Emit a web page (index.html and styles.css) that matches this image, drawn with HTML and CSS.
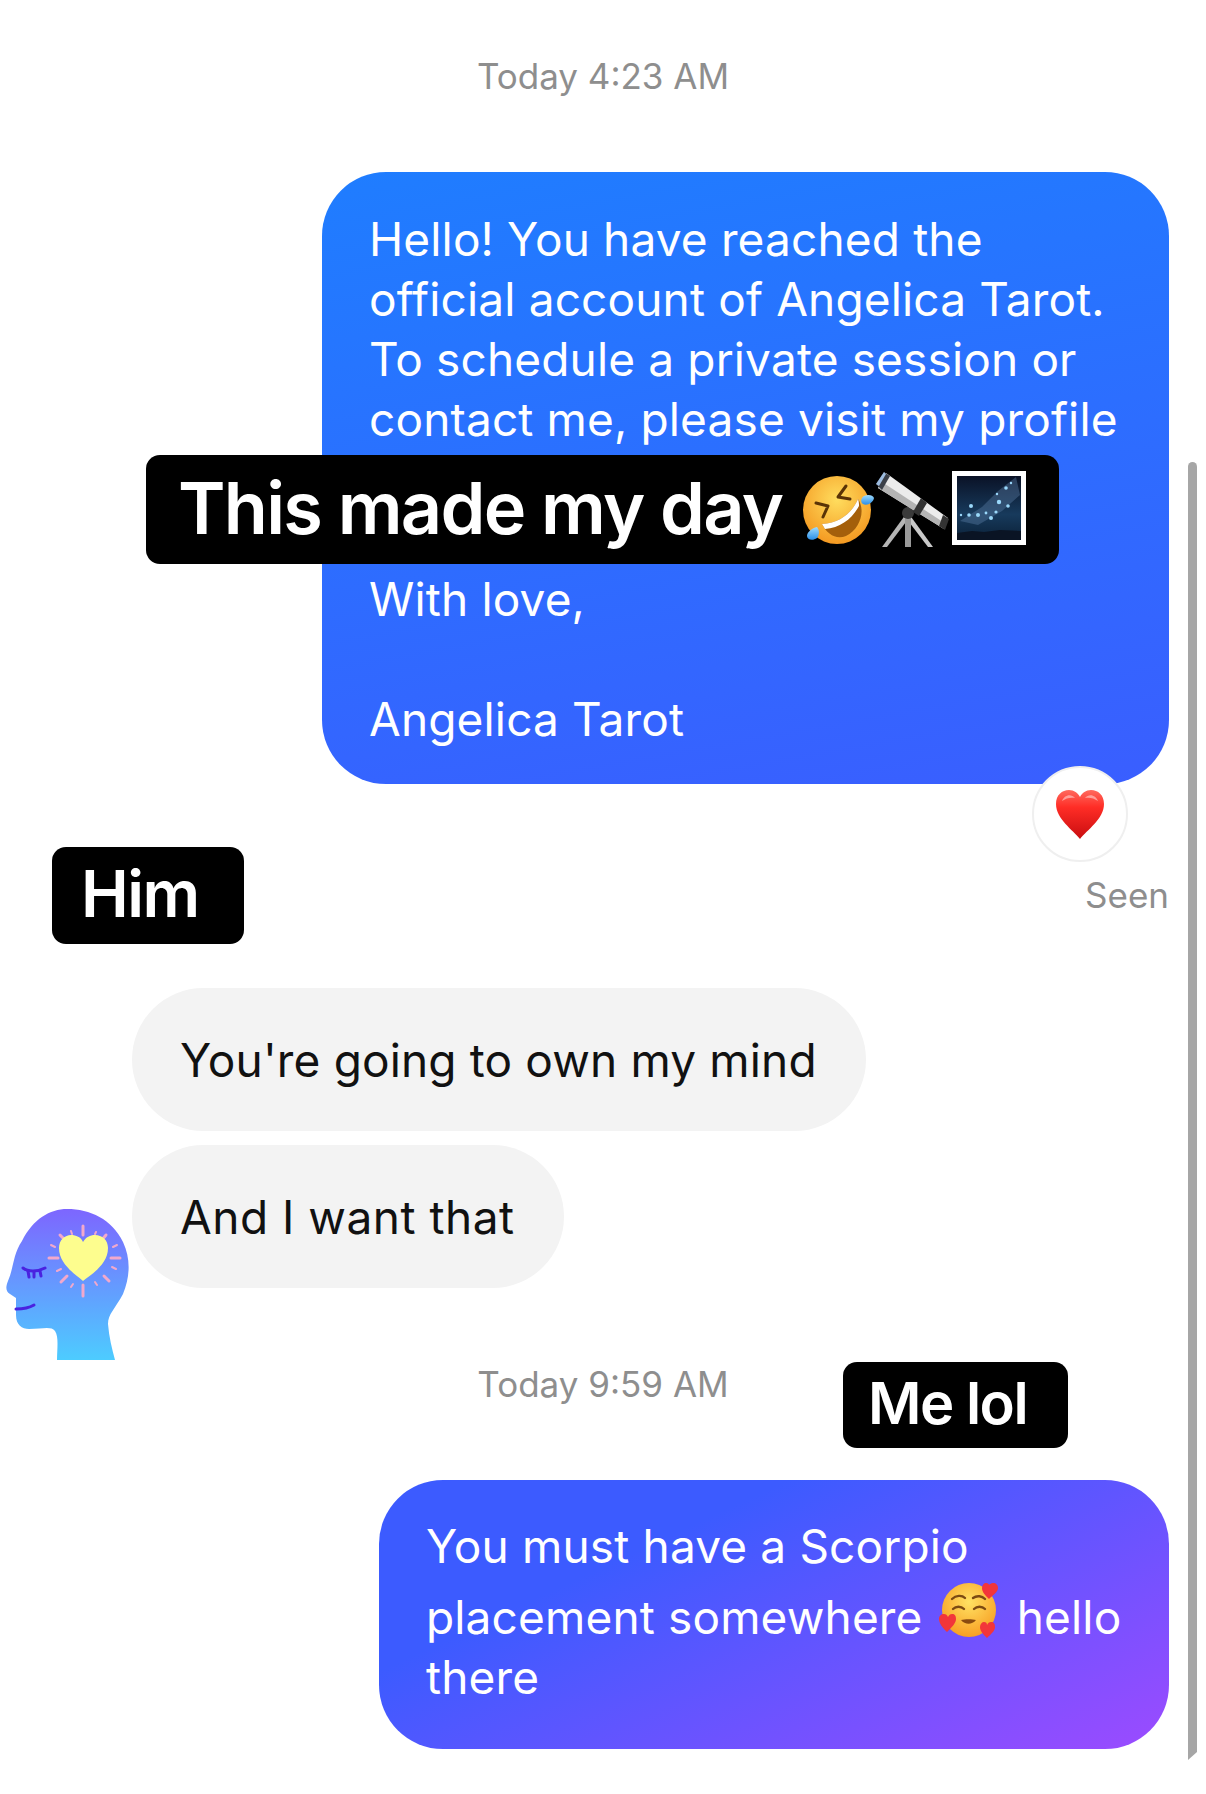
FILE: index.html
```html
<!DOCTYPE html>
<html lang="en">
<head>
<meta charset="UTF-8">
<title>Chat</title>
<link rel="stylesheet" href="styles.css">
</head>
<body>
<div id="page">
	<div class="time first">Today 4:23 AM</div>
	<div class="bubble blue">
		Hello! You have reached the<br>
		official account of Angelica Tarot.<br>
		To schedule a private session or<br>
		contact me, please visit my profile<br>
		<br>
		<br>
		With love,<br>
		<br>
		Angelica Tarot
	</div>
	<div class="reaction">
		<svg class="heart" viewBox="0 0 48 49">
			<defs>
				<linearGradient id="heartFill" x1="0" y1="0" x2="0" y2="1">
					<stop offset="0" stop-color="#ff6a5e"/>
					<stop offset=".35" stop-color="#ff2d26"/>
					<stop offset="1" stop-color="#c90d10"/>
				</linearGradient>
			</defs>
			<path d="M24 49C17 40 0 29 0 14 0 5 6 0 13 0c5 0 9 3 11 7 2-4 6-7 11-7 7 0 13 5 13 14 0 15-17 26-24 35z" fill="url(#heartFill)"/>
			<path d="M6 11c2-6 9-8 13-3-4-1-9 0-13 3zM29 8c4-5 11-3 13 3-4-3-9-4-13-3z" fill="#fff" opacity=".45"/>
		</svg>
	</div>
	<div class="seen">Seen</div>

	<div class="thread">
		<svg class="avatar" viewBox="0 0 127 152">
			<defs>
				<linearGradient id="headFill" x1="0" y1="0" x2="0" y2="1">
					<stop offset="0" stop-color="#7d66ff"/>
					<stop offset="1" stop-color="#4dccff"/>
				</linearGradient>
			</defs>
			<path d="M52 151C52 140 54 128 50 122 46 117 38 120 24 120 17 120 11 116 11 106L11 89 5 85C0 82 1 77 3 72 9 58 8 45 17 32 28 10 45 0 62 0 85 0 107 10 118 33 126 50 125 68 118 85 110 100 103 105 103 115 104 128 107 140 110 151z" fill="url(#headFill)"/>
			<g stroke="#f2a8cc" stroke-linecap="round">
				<line x1="78" y1="17" x2="78" y2="26" stroke-width="3"/>
				<line x1="78" y1="76" x2="78" y2="87" stroke-width="3"/>
				<line x1="44" y1="49" x2="53" y2="49" stroke-width="3"/>
				<line x1="106" y1="49" x2="115" y2="49" stroke-width="3"/>
				<line x1="55" y1="26" x2="60" y2="31" stroke-width="3"/>
				<line x1="101" y1="26" x2="96" y2="32" stroke-width="3"/>
				<line x1="56" y1="73" x2="62" y2="67" stroke-width="3"/>
				<line x1="99" y1="67" x2="104" y2="72" stroke-width="3"/>
				<line x1="66" y1="22" x2="67" y2="25" stroke-width="2"/>
				<line x1="91" y1="23" x2="90" y2="25" stroke-width="2"/>
				<line x1="108" y1="38" x2="112" y2="36" stroke-width="2"/>
				<line x1="107" y1="58" x2="111" y2="60" stroke-width="2"/>
				<line x1="90" y1="73" x2="92" y2="76" stroke-width="2"/>
				<line x1="68" y1="75" x2="66" y2="78" stroke-width="2"/>
				<line x1="52" y1="62" x2="56" y2="60" stroke-width="2"/>
				<line x1="46" y1="36" x2="50" y2="38" stroke-width="2"/>
			</g>
			<path d="M78 72C70 65 54 55 54 39 54 31 60 26 66 26 71 26 76 28 78 33 81 28 85 26 90 26 97 26 103 31 103 39 103 55 87 65 78 72z" fill="#fdfd8e"/>
			<g fill="none" stroke="#4a22e0" stroke-width="3" stroke-linecap="round">
				<path d="M18 59C23 63 32 63 40 59"/>
				<path d="M23 62L24 68M29 63L29 68M35 62L36 67"/>
				<path d="M11 100C18 100 24 99 29 96"/>
			</g>
		</svg>
		<div class="stack">
			<div class="bubble grey">You're going to own my mind</div>
			<div class="bubble grey loose">And I want that</div>
		</div>
	</div>

	<div class="time">Today 9:59 AM</div>
	<div class="bubble purple">
		You must have a Scorpio<br>
		placement somewhere
		<svg class="emoji inline" viewBox="0 0 60 56">
			<defs>
				<radialGradient id="faceFill" cx=".5" cy=".35" r=".7">
					<stop offset="0" stop-color="#ffe163"/>
					<stop offset="1" stop-color="#f79a1e"/>
				</radialGradient>
			</defs>
			<circle cx="30" cy="28" r="27" fill="url(#faceFill)"/>
			<g fill="none" stroke="#7c4a12" stroke-width="2.4" stroke-linecap="round">
				<path d="M13 17C17 13 23 13 26 16M34 16C38 13 43 14 46 17"/>
				<path d="M14 27C17 24 22 24 25 27M35 27C38 24 43 24 46 27"/>
			</g>
			<path d="M22 38C26 43 33 43 37 38 33 37 26 37 22 38z" fill="#8a4b10"/>
			<path d="M50 17C46 13 43 10 43 6 43 3 45 1 47 1 49 1 50 2 50 3 51 2 52 1 54 1 57 1 59 3 59 6 59 10 54 13 50 17z" fill="#f2353a"/>
			<path d="M8 50C3 45 0 41 0 37 0 34 2 32 5 32 7 32 8 33 9 35 10 33 11 32 13 32 16 32 17 34 17 37 17 41 13 45 8 50z" fill="#f2353a"/>
			<path d="M48 56C44 52 41 49 41 45 41 42 43 40 45 40 47 40 48 41 48 43 49 41 50 40 52 40 55 40 56 42 56 45 56 49 52 52 48 56z" fill="#f2353a"/>
		</svg>
		hello<br>
		there
	</div>

	<div class="label day">
		<span>This made my day</span>
		<svg class="emoji rofl" viewBox="0 0 72 70">
			<defs>
				<radialGradient id="roflFill" cx=".5" cy=".35" r=".7">
					<stop offset="0" stop-color="#ffdd5e"/>
					<stop offset="1" stop-color="#f3941d"/>
				</radialGradient>
				<linearGradient id="dropFill" x1="0" y1="0" x2="0" y2="1">
					<stop offset="0" stop-color="#9fdcff"/>
					<stop offset="1" stop-color="#2b8fe8"/>
				</linearGradient>
			</defs>
			<circle cx="35" cy="35" r="34" fill="url(#roflFill)"/>
			<path d="M20 49C38 48 50 38 56 24 64 36 58 54 44 61 34 65 25 59 20 49z" fill="#a45f0b"/>
			<path d="M20 49C38 48 50 38 56 24 57 27 57 29 57 31 50 44 38 53 23 54 22 52 21 51 20 49z" fill="#fff"/>
			<g fill="none" stroke="#5a3306" stroke-width="3" stroke-linecap="round" stroke-linejoin="round">
				<path d="M44 11L36 22 48 24"/>
				<path d="M14 28L26 31 21 42"/>
			</g>
			<path d="M62 21C66 19 71 20 72 23 71 28 65 31 61 29 58 27 59 23 62 21z" fill="url(#dropFill)"/>
			<path d="M15 52C17 54 18 59 15 63 11 66 5 65 5 61 5 57 10 53 15 52z" fill="url(#dropFill)"/>
		</svg>
		<svg class="emoji scope" viewBox="0 0 74 76">
			<path d="M30 42L6 75 11 75 33 46z" fill="#b5b5b5"/>
			<path d="M33 42L57 75 52 75 30 46z" fill="#c9c9c9"/>
			<path d="M29 46L29 75 35 75 35 46z" fill="#9a9a9a"/>
			<circle cx="32" cy="41" r="6" fill="#3a3a3a"/>
			<path d="M10 1L72 46 68 57 2 16z" fill="#ececec"/>
			<path d="M2 16L42 41 68 57 70 52 6 10z" fill="#b4b4b4"/>
			<path d="M0 12L8 0 14 4 6 18z" fill="#3a3f48"/>
			<path d="M0 12L8 0 10 2 3 14z" fill="#9dbce0"/>
			<path d="M45 26L51 31 43 44 37 40z" fill="#333"/>
			<path d="M67 43L73 47 69 58 63 54z" fill="#333"/>
		</svg>
		<svg class="emoji sky" viewBox="0 0 74 74">
			<defs>
				<linearGradient id="skyFill" x1="0" y1="0" x2="0" y2="1">
					<stop offset="0" stop-color="#0a1226"/>
					<stop offset=".6" stop-color="#173a5c"/>
					<stop offset="1" stop-color="#0b2138"/>
				</linearGradient>
			</defs>
			<rect width="74" height="74" fill="#fff"/>
			<rect x="5" y="5" width="64" height="64" fill="url(#skyFill)"/>
			<path d="M5 62L20 60 32 61 48 59 69 60 69 69 5 69z" fill="#0a1424"/>
			<path d="M8 50L30 36 46 20 64 6 68 24 50 40 26 54z" fill="#5d7fa8" opacity=".4"/>
			<g fill="#9ad8fa">
				<circle cx="19" cy="35" r="2"/>
				<circle cx="26" cy="44" r="2"/>
				<circle cx="17" cy="44" r="1.8"/>
				<circle cx="39" cy="47" r="2"/>
				<circle cx="44" cy="41" r="1.6"/>
				<circle cx="47" cy="31" r="2.2"/>
				<circle cx="54" cy="17" r="1.8"/>
				<circle cx="59" cy="12" r="1.2"/>
				<circle cx="56" cy="35" r="1.8"/>
				<circle cx="34" cy="42" r="1.4"/>
				<circle cx="9" cy="44" r="1.2"/>
				<circle cx="45" cy="23" r="1.2"/>
			</g>
		</svg>
	</div>
	<div class="label him">Him</div>
	<div class="label me">Me lol</div>
	<div class="scrollbar"></div>
</div>
</body>
</html>
```
FILE: styles.css
```css
html, body {
	margin: 0;
	background: #fff;
}
#page {
	position: relative;
	display: flex;
	flex-direction: column;
	width: 1206px;
	height: 1794px;
	overflow: hidden;
	font-family: Inter, "Liberation Sans", sans-serif;
}
.time {
	margin-top: 1px;
	text-align: center;
	font-size: 35px;
	line-height: 44px;
	color: #8e8e8e;
}
.time.first {
	margin-top: 54px;
}
.bubble {
	box-sizing: border-box;
	font-size: 46px;
	line-height: 60px;
	letter-spacing: .15px;
}
.blue, .purple {
	align-self: flex-end;
	margin-right: 37px;
	color: #fff;
}
.blue {
	width: 847px;
	margin-top: 74px;
	padding: 37px 47px 35px;
	border-radius: 64px;
	background: linear-gradient(170deg, #1f7dff, #3a5eff);
}
.purple {
	width: 790px;
	height: 269px;
	margin-top: 74px;
	padding: 36px 0 0 47px;
	border-radius: 64px;
	background: linear-gradient(155deg, #3c5bff 30%, #9c4bff);
	white-space: nowrap;
}
.reaction {
	display: flex;
	align-self: flex-end;
	align-items: center;
	justify-content: center;
	box-sizing: border-box;
	width: 96px;
	height: 96px;
	margin: -18px 78px 0 0;
	border: 2px solid #efefef;
	border-radius: 50%;
	background: #fff;
}
.heart {
	width: 48px;
	height: 49px;
}
.seen {
	align-self: flex-end;
	margin: 11px 37px 0 0;
	font-size: 35px;
	line-height: 44px;
	color: #8e8e8e;
}
.thread {
	display: flex;
	align-items: flex-end;
	margin-top: 71px;
	padding-left: 5px;
}
.avatar {
	flex: none;
	width: 127px;
	height: 152px;
}
.stack {
	display: flex;
	flex-direction: column;
	align-items: flex-start;
	gap: 14px;
	padding-bottom: 73px;
}
.grey {
	height: 143px;
	padding: 0 49px 0 48px;
	border-radius: 72px;
	background: #f3f3f3;
	color: #111;
	line-height: 144px;
}
.loose {
	letter-spacing: .5px;
}
.emoji {
	flex: none;
}
.inline {
	width: 60px;
	height: 56px;
	margin: 6px 5px 8px 3px;
	vertical-align: -12px;
}
.label {
	position: absolute;
	display: flex;
	align-items: center;
	box-sizing: border-box;
	border-radius: 14px;
	background: #000;
	color: #fff;
	font-weight: 600;
	letter-spacing: -1.5px;
}
.day {
	left: 146px;
	top: 455px;
	width: 913px;
	height: 109px;
	padding-left: 32px;
	font-size: 72px;
}
.day span {
	margin-top: -4px;
	letter-spacing: -1.7px;
}
.rofl {
	width: 72px;
	height: 70px;
	margin-left: 20px;
}
.scope {
	width: 74px;
	height: 76px;
	margin-left: 2px;
}
.sky {
	width: 74px;
	height: 74px;
	margin: -4px 0 0 2px;
}
.him {
	left: 52px;
	top: 847px;
	width: 192px;
	height: 97px;
	padding: 0 0 4px 29px;
	font-size: 64px;
}
.me {
	left: 843px;
	top: 1362px;
	width: 225px;
	height: 86px;
	padding: 0 0 4px 25px;
	font-size: 58px;
}
.scrollbar {
	position: absolute;
	left: 1188px;
	top: 462px;
	width: 9px;
	height: 1298px;
	border-radius: 5px 5px 0 0;
	background: #a6a6a6;
	clip-path: polygon(0 0, 100% 0, 100% calc(100% - 8px), 0 100%);
}
```
